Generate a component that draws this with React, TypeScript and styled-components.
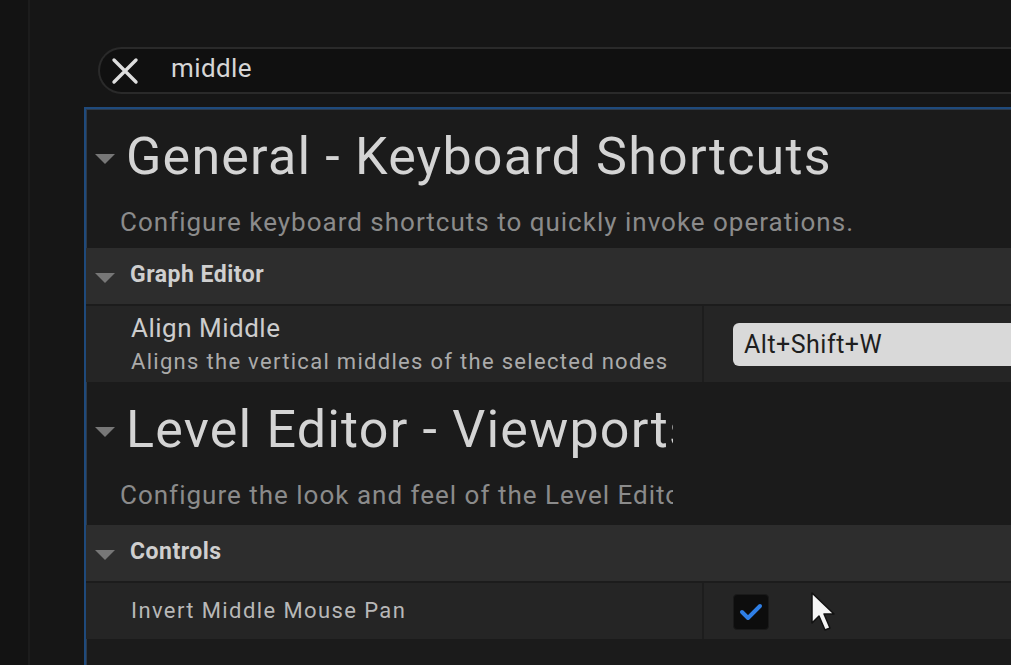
import React from 'react';
import styled, { createGlobalStyle } from 'styled-components';

const GlobalStyle = createGlobalStyle`
    html, body {
        margin: 0;
        padding: 0;
        background: #141414;
        overflow: hidden;
    }
    body {
        font-family: Roboto, "Noto Sans", "Liberation Sans", sans-serif;
    }
`;

const Page = styled.div`
    display: flex;
    width: 1011px;
    height: 665px;
    overflow: hidden;
    position: relative;
`;

const Gutter = styled.div`
    width: 28px;
    flex-shrink: 0;
    background: #131313;
    border-right: 2px solid #1c1c1c;
`;

const Main = styled.div`
    flex: 1;
    display: flex;
    flex-direction: column;
    padding: 47px 0 0 54px;
    background: #161616;
    min-width: 0;
    overflow: hidden;
`;

const SearchBar = styled.div`
    display: flex;
    align-items: center;
    flex-shrink: 0;
    height: 43px;
    margin-left: 14px;
    width: 1000px;
    padding-left: 11px;
    background: #101010;
    border: 2px solid #2a2a2a;
    border-right: none;
    border-radius: 24px 0 0 24px;
    gap: 32px;
`;

const SearchText = styled.span`
    font-size: 26px;
    letter-spacing: 0.4px;
    color: #d6d6d6;
    line-height: 1;
    margin-top: -5px;
`;

const Panel = styled.div`
    margin-top: 13px;
    width: 1000px;
    flex: 1;
    min-height: 0;
    overflow: hidden;
    background: #1b1b1b;
    border-top: 2px solid #1f4a7c;
    border-left: 2px solid #1f4a7c;
    box-shadow: inset 1px 1px 0 #2d3a4a;
    display: flex;
    flex-direction: column;
`;

const Section = styled.div<{ height: number; clip?: number }>`
    display: flex;
    flex-direction: column;
    height: ${(p) => p.height}px;
    padding-left: 9px;
    width: ${(p) => (p.clip ? `${p.clip}px` : 'auto')};
    overflow: hidden;
    flex-shrink: 0;
    box-sizing: border-box;
`;

const TitleRow = styled.div`
    display: flex;
    align-items: center;
    gap: 11px;
    height: 92px;
    margin-top: 2px;
    white-space: nowrap;
    flex-shrink: 0;
`;

const Triangle = styled.span<{ size?: number }>`
    width: 0;
    height: 0;
    flex-shrink: 0;
    border-left: ${(p) => (p.size || 10)}px solid transparent;
    border-right: ${(p) => (p.size || 10)}px solid transparent;
    border-top: ${(p) => Math.round((p.size || 10) * 0.95)}px solid #777;
    margin-top: 4px;
`;

const Title = styled.h1`
    margin: 0;
    font-size: 52px;
    font-weight: 400;
    color: #d4d4d4;
    letter-spacing: 1.2px;
    line-height: 1;
`;

const Description = styled.p`
    margin: 6px 0 0;
    padding-left: 25px;
    font-size: 26px;
    letter-spacing: 1px;
    color: #8b8b8b;
    white-space: nowrap;
    line-height: 1;
`;

const Category = styled.div`
    display: flex;
    align-items: center;
    gap: 15px;
    height: 56px;
    padding-left: 9px;
    background: #2d2d2d;
    border-bottom: 2px solid #1c1c1c;
    flex-shrink: 0;
`;

const CategoryLabel = styled.span`
    font-size: 23px;
    font-weight: 700;
    letter-spacing: 0.5px;
    color: #cfcfcf;
    margin-top: -3px;
`;

const PropertyRow = styled.div<{ height: number }>`
    display: flex;
    height: ${(p) => p.height}px;
    background: #252525;
    flex-shrink: 0;
`;

const NameCell = styled.div`
    width: 618px;
    flex-shrink: 0;
    display: flex;
    flex-direction: column;
    justify-content: center;
    padding-left: 45px;
    box-sizing: border-box;
    border-right: 2px solid #1d1d1d;
    gap: 7px;
`;

const PropName = styled.span<{ small?: boolean }>`
    font-size: ${(p) => (p.small ? 22 : 26)}px;
    letter-spacing: ${(p) => (p.small ? 1.4 : 0.5)}px;
    color: ${(p) => (p.small ? '#b8b8b8' : '#cdcdcd')};
    line-height: 1.1;
`;

const PropHint = styled.span`
    font-size: 22px;
    color: #ababab;
    letter-spacing: 1.3px;
    line-height: 1.1;
`;

const ValueCell = styled.div`
    flex: 1;
    display: flex;
    align-items: center;
    padding-left: 29px;
`;

const KeyBox = styled.div`
    width: 400px;
    height: 43px;
    display: flex;
    align-items: center;
    padding-left: 11px;
    background: #d9d9d9;
    border-radius: 6px 0 0 6px;
    font-size: 25px;
    letter-spacing: 0.5px;
    color: #1e1e1e;
`;

const CheckBox = styled.div`
    width: 34px;
    height: 34px;
    margin-top: 2px;
    border-radius: 4px;
    background: #0d0d0d;
    border: 1px solid #1a1a1a;
    display: flex;
    align-items: center;
    justify-content: center;
`;

const Gap = styled.div<{ height: number }>`
    height: ${(p) => p.height}px;
    flex-shrink: 0;
`;

const Cursor = styled.svg`
    position: absolute;
    left: 810px;
    top: 591px;
`;

const CloseIcon = () => (
    <svg width="28" height="28" viewBox="0 0 28 28">
        <path d="M3 3 L25 25 M25 3 L3 25" stroke="#dedede" strokeWidth="3.4" strokeLinecap="round" />
    </svg>
);

const CheckIcon = () => (
    <svg width="24" height="20" viewBox="0 0 24 20">
        <path d="M3 10 L9 16 L21 4" stroke="#2f7fe6" strokeWidth="4" fill="none" strokeLinecap="round" strokeLinejoin="round" />
    </svg>
);

const App = () => {
    return (
        <>
            <GlobalStyle />
            <Page>
                <Gutter />
                <Main>
                    <SearchBar>
                        <CloseIcon />
                        <SearchText>middle</SearchText>
                    </SearchBar>
                    <Panel>
                        <Section height={139}>
                            <TitleRow>
                                <Triangle />
                                <Title>General - Keyboard Shortcuts</Title>
                            </TitleRow>
                            <Description>Configure keyboard shortcuts to quickly invoke operations.</Description>
                        </Section>
                        <Category>
                            <Triangle />
                            <CategoryLabel>Graph Editor</CategoryLabel>
                        </Category>
                        <PropertyRow height={76}>
                            <NameCell>
                                <PropName>Align Middle</PropName>
                                <PropHint>Aligns the vertical middles of the selected nodes</PropHint>
                            </NameCell>
                            <ValueCell>
                                <KeyBox>Alt+Shift+W</KeyBox>
                            </ValueCell>
                        </PropertyRow>
                        <Section height={143} clip={587}>
                            <TitleRow>
                                <Triangle />
                                <Title>Level Editor - Viewports</Title>
                            </TitleRow>
                            <Description>Configure the look and feel of the Level Editor</Description>
                        </Section>
                        <Category>
                            <Triangle />
                            <CategoryLabel>Controls</CategoryLabel>
                        </Category>
                        <PropertyRow height={56}>
                            <NameCell>
                                <PropName small>Invert Middle Mouse Pan</PropName>
                            </NameCell>
                            <ValueCell>
                                <CheckBox>
                                    <CheckIcon />
                                </CheckBox>
                            </ValueCell>
                        </PropertyRow>
                        <Gap height={30} />
                    </Panel>
                </Main>
                <Cursor width="28" height="42" viewBox="0 0 28 42">
                    <path d="M2 2 L2 32 L9 25 L15 39 L20 37 L14 23 L24 23 Z" fill="#f4f4f4" stroke="#111" strokeWidth="1.5" strokeLinejoin="round" />
                </Cursor>
            </Page>
        </>
    );
};

export default App;
